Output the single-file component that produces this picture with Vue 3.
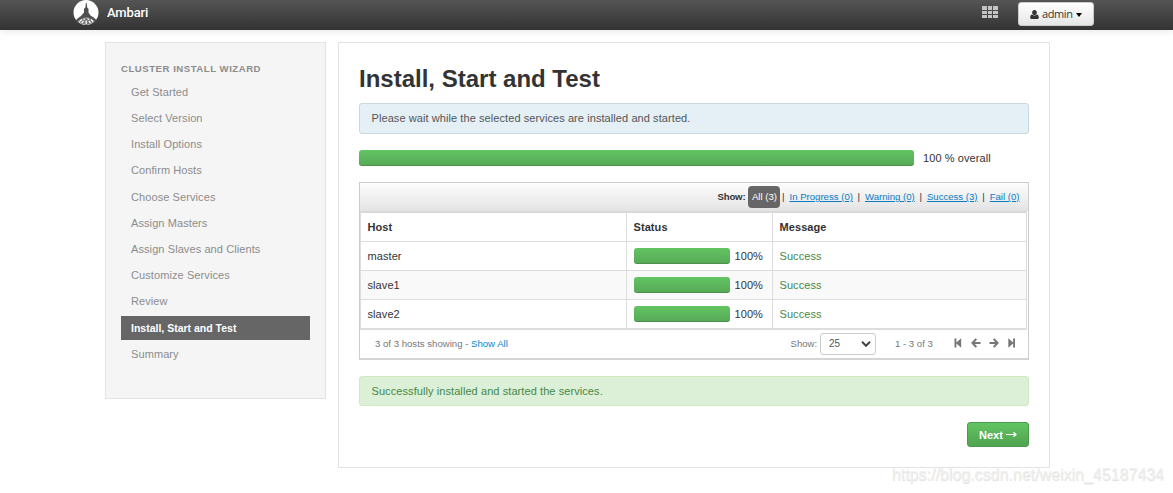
<script setup>
import { ref } from 'vue'

const steps = ref([
  'Get Started',
  'Select Version',
  'Install Options',
  'Confirm Hosts',
  'Choose Services',
  'Assign Masters',
  'Assign Slaves and Clients',
  'Customize Services',
  'Review',
  'Install, Start and Test',
  'Summary'
])
const currentStep = ref('Install, Start and Test')

const hosts = ref([
  { name: 'master', progress: 100, message: 'Success' },
  { name: 'slave1', progress: 100, message: 'Success' },
  { name: 'slave2', progress: 100, message: 'Success' }
])

const categories = ref([
  { label: 'In Progress', count: 0 },
  { label: 'Warning', count: 0 },
  { label: 'Success', count: 3 },
  { label: 'Fail', count: 0 }
])
</script>

<template>
  <div class="page">
    <header class="navbar">
      <div class="brand">
        <svg class="logo" viewBox="0 0 26 26">
          <circle cx="13" cy="12.500" r="12.500" fill="#fff" />
          <path d="M12.900 3h.8l.5 4.500 1.300 1.200v3.800l2 3 3.500 2.300 3 2.700-2.500 1.500-4-3-4.200-1.800-4.300 1.800-4 3-2.500-1.500 3-2.700 2.500-1.800 3-3.500V8.700l1.400-1.200z" fill="#505050" />
          <path d="M5 20.500l3.500-2 4.800-1.500 4.700 1.500 3.500 2-3 3-5.200 1.500-5.300-1.500z" fill="#777" />
          <path d="M6.500 21.500l2.500-2M10.500 18.700l1.500.8M14.500 18.500l1.500 1M18 19.500l2 2M9 23l1.500-2M13.200 20.500v3.500M16 21l1.500 2" stroke="#fff" stroke-width="1.300" />
        </svg>
        <span class="brand-name">Ambari</span>
      </div>
      <div class="nav-right">
        <div class="views-grid">
          <i v-for="n in 9" :key="n"></i>
        </div>
        <button class="user-btn">
          <svg class="user-icon" viewBox="0 0 10 10" preserveAspectRatio="none">
            <path d="M5 0C3.400 0 2.400 1.200 2.400 2.700S3.500 5.600 5 5.600s2.600-1.400 2.600-2.900S6.600 0 5 0zM2.500 4.900C.9 5.100.2 6.700.2 8.300c0 1 .6 1.700 1.600 1.700h6.400c1 0 1.600-.7 1.600-1.700 0-1.600-.7-3.200-2.300-3.400-.7.800-1.500 1.200-2.500 1.200s-1.800-.4-2.500-1.200z" fill="#333" />
          </svg>
          <span class="user-name">admin</span>
          <span class="caret"></span>
        </button>
      </div>
    </header>

    <div class="container">
      <aside class="sidebar">
        <div class="sidebar-title">CLUSTER INSTALL WIZARD</div>
        <ul class="steps">
          <li v-for="step in steps" :key="step" :class="{ active: step === currentStep }">
            <span>{{ step }}</span>
          </li>
        </ul>
      </aside>

      <main class="content">
        <h2>Install, Start and Test</h2>
        <div class="alert info"><span>Please wait while the selected services are installed and started.</span></div>

        <div class="overall">
          <div class="overall-track">
            <div class="bar" :style="{ width: '100%' }"></div>
          </div>
          <span>100 % overall</span>
        </div>

        <div class="hosts-box">
          <div class="filter-bar">
            <b>Show:</b>
            <span class="chip">All (3)</span>
            <template v-for="category in categories" :key="category.label">
              <span class="sep">|</span>
              <a>{{ category.label }} ({{ category.count }})</a>
            </template>
          </div>

          <div class="table">
            <div class="row head">
              <div class="cell">Host</div>
              <div class="cell">Status</div>
              <div class="cell">Message</div>
            </div>
            <div v-for="host in hosts" :key="host.name" class="row">
              <div class="cell">{{ host.name }}</div>
              <div class="cell">
                <div class="track">
                  <div class="bar" :style="{ width: `${host.progress}%` }"></div>
                </div>
                <span class="percent">{{ host.progress }}%</span>
              </div>
              <div class="cell success">{{ host.message }}</div>
            </div>
          </div>

          <div class="table-footer">
            <div class="showing">3 of 3 hosts showing - <a>Show All</a></div>
            <span class="show-label">Show:</span>
            <div class="page-size">
              <span>25</span>
              <svg viewBox="0 0 10 6"><path d="M1 .8l4 4 4-4" fill="none" stroke="#444" stroke-width="2" /></svg>
            </div>
            <span class="range">1 - 3 of 3</span>
            <div class="pager">
              <svg viewBox="0 0 10 10"><path d="M1.500.5h1.900v4L8.200.3v9.400L3.400 5.500v4H1.500z" fill="#777" /></svg>
              <svg viewBox="0 0 10 10"><path d="M5.300.9L1.500 5l3.800 4.100M1.800 5h7.700" fill="none" stroke="#777" stroke-width="2.100" /></svg>
              <svg viewBox="0 0 10 10"><path d="M4.700.9L8.500 5 4.700 9.100M8.200 5H.5" fill="none" stroke="#777" stroke-width="2.100" /></svg>
              <svg viewBox="0 0 10 10"><path d="M8 .5H6.100v4L1.300.3v9.400l4.800-4.200v4H8z" fill="#777" /></svg>
            </div>
          </div>
        </div>

        <div class="alert done"><span>Successfully installed and started the services.</span></div>

        <div class="actions">
          <button class="next-btn">
            <span>Next</span>
            <svg viewBox="0 0 11 7"><path d="M0 3.500h9.500M7.500 1.300l2.500 2.200-2.500 2.200" fill="none" stroke="#fff" stroke-width="1.200" /></svg>
          </button>
        </div>
      </main>
    </div>

    <div class="watermark">https://blog.csdn.net/weixin_45187434</div>
  </div>
</template>

<style>
body {
  margin: 0;
  background: #fff;
}
</style>

<style scoped>
.page {
  position: relative;
  height: 493px;
  overflow: hidden;
  font-family: "Liberation Sans", Arial, sans-serif;
  font-size: 11px;
  line-height: 16px;
  color: #333;
  white-space: nowrap;
}

.page * {
  box-sizing: border-box;
}

.navbar {
  display: flex;
  justify-content: space-between;
  height: 30px;
  padding: 0 79px 0 73px;
  background: linear-gradient(#555, #333);
  box-shadow: 0 1px 8px rgba(0, 0, 0, 0.1);
}

.brand {
  display: flex;
  align-items: flex-start;
  gap: 8px;
}

.logo {
  width: 26px;
  height: 26px;
}

.brand-name {
  margin-top: 5px;
  font-family: Roboto, sans-serif;
  font-size: 13px;
  font-weight: 500;
  letter-spacing: -0.15px;
  color: #fff;
}

.nav-right {
  display: flex;
  align-items: flex-start;
}

.views-grid {
  display: grid;
  grid-template-columns: repeat(3, 5px);
  grid-template-rows: 4px 3px 3px;
  column-gap: 0.5px;
  row-gap: 1px;
  margin: 6px 20px 0 0;
}

.views-grid i {
  width: 4.5px;
  background: #c4c4c4;
}

.user-btn {
  display: flex;
  align-items: center;
  width: 76px;
  height: 24px;
  margin-top: 2px;
  padding: 0 11px;
  border: 1px solid #ccc;
  border-radius: 3px;
  background: linear-gradient(#fff, #e6e6e6);
  font-family: "Open Sans", sans-serif;
  font-size: 11px;
  color: #333;
}

.user-icon {
  flex-shrink: 0;
  width: 9px;
  height: 9px;
  margin-right: 3px;
}

.user-name {
  margin-top: -1px;
  letter-spacing: -0.4px;
}

.caret {
  flex-shrink: 0;
  margin: 1px 0 0 3px;
  border-top: 4px solid #000;
  border-left: 3.5px solid transparent;
  border-right: 3.5px solid transparent;
}

.container {
  display: flex;
  align-items: flex-start;
  gap: 12px;
  padding: 12px 0 0 105px;
}

.sidebar {
  width: 221px;
  height: 357px;
  padding: 18px 15px 0;
  border: 1px solid #e3e3e3;
  background: #f5f5f5;
  color: #8c8c8c;
}

.sidebar-title {
  font-size: 9.6px;
  font-weight: bold;
  letter-spacing: 0.52px;
}

.steps {
  display: flex;
  flex-direction: column;
  gap: 2.15px;
  margin: 3px 0 0;
  padding: 0;
  list-style: none;
}

.steps li {
  height: 24px;
  padding-left: 10px;
  line-height: 24px;
  letter-spacing: 0.09px;
}

.steps li.active {
  margin-top: 0.6px;
  background: #666;
  color: #fff;
  font-size: 10.5px;
  font-weight: bold;
  letter-spacing: 0;
}

.content {
  width: 712px;
  height: 426px;
  padding: 20px 20px 0;
  border: 1px solid #e3e3e3;
}

h2 {
  margin: 0 0 8px;
  font-size: 24px;
  line-height: 32px;
}

.alert {
  display: flex;
  height: 31px;
  padding-left: 11.5px;
  border: 1px solid;
  border-radius: 3px;
  line-height: 28px;
  letter-spacing: 0.08px;
}

.info {
  border-color: #c8dadd;
  background: #e4f0f5;
  color: #555;
}

.done {
  height: 30px;
  margin-top: 16px;
  border-color: #d2e8c5;
  background: #dcefd7;
  color: #468847;
}

.overall {
  display: flex;
  gap: 9px;
  margin-top: 16px;
  letter-spacing: 0.08px;
}

.overall-track {
  width: 555px;
}

.bar {
  height: 16px;
  border-radius: 3px;
  background: linear-gradient(#62c462, #57a957);
  box-shadow: inset 0 -1px 0 rgba(0, 0, 0, 0.15);
}

.hosts-box {
  height: 178px;
  margin-top: 16px;
  border: 1px solid #ccc;
  border-bottom: 2px solid #d4d4d4;
}

.filter-bar {
  display: flex;
  align-items: center;
  justify-content: flex-end;
  height: 28px;
  padding-right: 8.5px;
  background: linear-gradient(#fdfdfd, #e3e3e3);
  font-size: 9.6px;
}

.filter-bar b {
  letter-spacing: -0.15px;
}

.chip {
  width: 32px;
  height: 22px;
  margin-left: 3px;
  border-radius: 4px;
  background: #666;
  color: #fff;
  line-height: 22px;
  text-align: center;
}

.sep {
  margin: 0 5px 0 4.6px;
}

.chip + .sep {
  margin-left: 1.5px;
}

a {
  color: #0088cc;
}

.filter-bar a {
  color: #0a7cc4;
  text-decoration: underline;
}

.table {
  width: 667px;
  border: 1px solid #ddd;
  border-top: 2px solid #d8d8d8;
}

.row {
  display: grid;
  grid-template-columns: 265px 146px 1fr;
  height: 29px;
  border-bottom: 1px solid #ddd;
}

.row:nth-child(odd):not(.head) {
  background: #f9f9f9;
}

.cell {
  display: flex;
  align-items: center;
  padding-left: 6.5px;
  letter-spacing: 0.08px;
}

.cell + .cell {
  border-left: 1px solid #ddd;
}

.head {
  font-weight: bold;
}

.track {
  width: 96px;
}

.percent {
  margin-left: 5px;
}

.success {
  color: #468847;
}

.table-footer {
  display: flex;
  align-items: center;
  height: 27px;
  padding: 0 10px 0 15px;
  font-size: 9.6px;
  color: #777;
}

.showing {
  width: 415.5px;
}

.show-label {
  width: 26.5px;
}

.page-size {
  display: flex;
  align-items: center;
  justify-content: space-between;
  width: 56px;
  height: 22px;
  margin-left: 3px;
  padding: 0 4px 0 8px;
  border: 1px solid #ccc;
  border-radius: 3px;
  font-size: 10px;
  color: #555;
}

.page-size svg {
  width: 10px;
  height: 6px;
}

.range {
  width: 58px;
  margin-left: 19px;
}

.pager {
  display: flex;
  gap: 8px;
  margin-bottom: 2px;
}

.pager svg {
  width: 10px;
  height: 10px;
}

.actions {
  display: flex;
  justify-content: flex-end;
  margin-top: 16px;
}

.next-btn {
  display: flex;
  align-items: center;
  gap: 3px;
  width: 62px;
  height: 25px;
  padding: 0 11px;
  border: 1px solid #4a9a4a;
  border-radius: 3px;
  background: linear-gradient(#62c462, #51a351);
  color: #fff;
  font-family: inherit;
  font-size: 11px;
  font-weight: bold;
}

.next-btn svg {
  width: 11px;
  height: 7px;
}

.watermark {
  position: absolute;
  right: 9px;
  bottom: 8px;
  font-size: 16px;
  line-height: 20px;
  color: #f0f0f0;
  text-shadow: 0.5px 1px 1px #dcdcdc;
}
</style>
